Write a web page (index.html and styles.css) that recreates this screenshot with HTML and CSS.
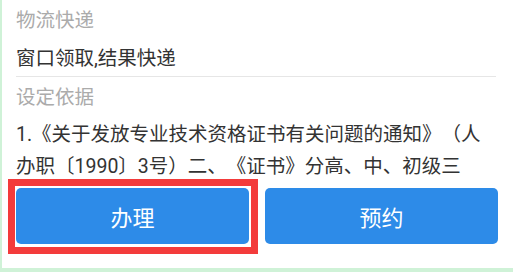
FILE: index.html
```html
<!DOCTYPE html>
<html lang="zh-CN">
<head>
<meta charset="utf-8">
<title>办理</title>
<link rel="stylesheet" href="styles.css">
</head>
<body>
<div class="screen">
  <div class="content">
    <div class="label label-first">物流快递</div>
    <div class="value">窗口领取,结果快递</div>
    <div class="label label-second">设定依据</div>
    <p class="para">1.《关于发放专业技术资格证书有关问题的通知》（人<br>办职〔1990〕3号）二、《证书》分高、中、初级三</p>
  </div>
  <div class="actions">
    <button class="btn">办理</button>
    <button class="btn">预约</button>
  </div>
  <div class="highlight"></div>
</div>
</body>
</html>
```
FILE: styles.css
```css
html, body {
  margin: 0;
  padding: 0;
  background: #ffffff;
}
.screen {
  position: relative;
  width: 513px;
  height: 272px;
  box-sizing: border-box;
  border-left: 2px solid #cff2d7;
  border-bottom: 4px solid #cff2d7;
  display: flex;
  flex-direction: column;
  font-family: Roboto, "Noto Sans CJK SC", sans-serif;
  font-size: 19.5px;
  background: #ffffff;
}
.content {
  height: 178px;
  flex: none;
  overflow: hidden;
  padding: 0 17px 0 14px;
}
.label {
  color: #ababab;
}
.label-first {
  padding-top: 2px;
  line-height: 38px;
}
.value {
  margin-top: 2px;
  line-height: 34px;
  color: #333333;
  border-bottom: 1px solid #e6e6e6;
}
.label-second {
  line-height: 42px;
}
.para {
  margin: 0;
  line-height: 32px;
  color: #333333;
  white-space: nowrap;
  text-spacing-trim: space-all;
}
.actions {
  flex: none;
  display: flex;
  gap: 16px;
  padding: 10px 15px 24px 14px;
  background: #ffffff;
}
.btn {
  flex: 1;
  height: 56px;
  border: none;
  border-radius: 5px;
  background: #2d8be8;
  color: #ffffff;
  font-family: Roboto, "Noto Sans CJK SC", sans-serif;
  font-size: 22px;
  padding: 0;
}
.highlight {
  position: absolute;
  left: 6px;
  top: 179px;
  width: 250px;
  height: 75px;
  box-sizing: border-box;
  border: 7px solid #f33b3b;
}
```
